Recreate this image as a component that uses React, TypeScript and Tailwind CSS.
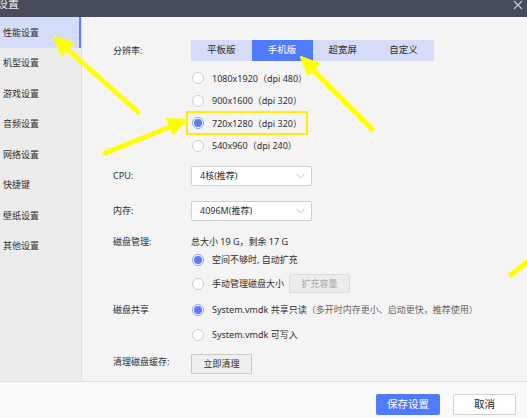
import React from "react";

const font = "font-['Noto_Sans','Noto_Sans_CJK_SC',sans-serif]";

function Radio({ checked }: { checked?: boolean }) {
  return checked ? (
    <span className="w-[12px] h-[12px] rounded-full border border-[#8aa2f5] bg-white flex items-center justify-center shrink-0">
      <span className="w-[8px] h-[8px] rounded-full bg-[#5a7cf6]" />
    </span>
  ) : (
    <span className="w-[12px] h-[12px] rounded-full border border-[#cfcfcf] bg-white shrink-0" />
  );
}

function RadioRow({ checked, children, h }: { checked?: boolean; children: React.ReactNode; h: string }) {
  return (
    <div className={`flex items-center gap-[8px] pl-[1px] ${h}`}>
      <Radio checked={checked} />
      <span>{children}</span>
    </div>
  );
}

function Select({ value }: { value: string }) {
  return (
    <div className="w-[121px] h-[20px] border border-[#d0d0d0] rounded-[2px] bg-white flex items-center justify-between pl-[8px] pr-[6px]">
      <span>{value}</span>
      <svg width="9" height="6" viewBox="0 0 9 6">
        <path d="M0.5 0.8 L4.5 4.8 L8.5 0.8" fill="none" stroke="#b8b8b8" strokeWidth="0.9" />
      </svg>
    </div>
  );
}

export default function App() {
  const side = ["性能设置", "机型设置", "游戏设置", "音频设置", "网络设置", "快捷键", "壁纸设置", "其他设置"];
  const tabs = ["平板版", "手机版", "超宽屏", "自定义"];
  return (
    <div className={`relative w-[527px] h-[418px] overflow-hidden bg-[#f4f4f4] text-[#2e2e2e] text-[9px] ${font}`}>
      {/* title bar */}
      <div className="h-[17px] bg-[#474c5c] flex justify-between">
        <span className="-ml-[3px] -mt-[4px] text-[11px] leading-[16px] text-[#eeeeee]">设置</span>
        <svg width="10" height="10" viewBox="0 0 10 10" className="mr-[4px] mt-[0px]">
          <path d="M1 1 L9 9 M9 1 L1 9" stroke="#c9cbd0" strokeWidth="1.1" />
        </svg>
      </div>
      <div className="flex h-[364px]">
        {/* sidebar */}
        <div className="w-[82px] bg-[#ececec] border-r border-[#dedede] flex flex-col">
          {side.map((s, i) => (
            <div
              key={s}
              className={`h-[30.5px] flex items-center pl-[3px] ${i === 0 ? "bg-[#d4dcf9] border-r-[2px] border-[#5f7ff2]" : ""}`}
            >
              {s}
            </div>
          ))}
        </div>
        {/* content */}
        <div className="flex-1 pl-[31px] pt-[23px] flex flex-col">
          <div className="flex">
            <div className="w-[78px] h-[21px] flex items-center">分辨率:</div>
            <div className="flex flex-col">
              <div className="flex h-[21px] bg-[#d4dcf8] text-[9.5px]">
                {tabs.map((t, i) => (
                  <div
                    key={t}
                    className={`w-[60.75px] flex items-center justify-center ${i === 1 ? "bg-[#4f7bfc] text-white" : ""}`}
                  >
                    {t}
                  </div>
                ))}
              </div>
              <div className="h-[6px]" />
              <RadioRow h="h-[22.5px]">1080x1920（dpi 480）</RadioRow>
              <RadioRow h="h-[22.5px]">900x1600（dpi 320）</RadioRow>
              <RadioRow h="h-[22.5px]" checked>720x1280（dpi 320）</RadioRow>
              <RadioRow h="h-[22.5px]">540x960（dpi 240）</RadioRow>
            </div>
          </div>
          <div className="flex mt-[9px] items-center">
            <div className="w-[78px]">CPU:</div>
            <Select value="4核(推荐)" />
          </div>
          <div className="flex mt-[15px] items-center">
            <div className="w-[78px]">内存:</div>
            <Select value="4096M(推荐)" />
          </div>
          <div className="flex mt-[13px]">
            <div className="w-[78px] h-[15px] flex items-center">磁盘管理:</div>
            <div className="flex flex-col">
              <div className="h-[15px] flex items-center">总大小 19 G，剩余 17 G</div>
              <RadioRow h="h-[21px]" checked>空间不够时, 自动扩充</RadioRow>
              <div className="flex items-center h-[23px] mt-[2px]">
                <RadioRow h="h-[23px]">手动管理磁盘大小</RadioRow>
                <div className="ml-[5px] w-[61px] h-[19px] bg-[#ececec] border border-[#dcdcdc] rounded-[2px] flex items-center justify-center text-[#a8a8a8]">
                  扩充容量
                </div>
              </div>
            </div>
          </div>
          <div className="flex mt-[3px]">
            <div className="w-[78px] h-[24px] flex items-center">磁盘共享</div>
            <div className="flex flex-col">
              <RadioRow h="h-[24px]" checked>
                System.vmdk 共享只读<span className="text-[#666]">（多开时内存更小、启动更快，推荐使用）</span>
              </RadioRow>
              <RadioRow h="h-[26px]">System.vmdk 可写入</RadioRow>
            </div>
          </div>
          <div className="flex mt-[6px] items-center">
            <div className="w-[78px] -mt-[4px]">清理磁盘缓存:</div>
            <div className="w-[61px] h-[20px] bg-[#efefef] border border-[#c9c9c9] rounded-[1px] flex items-center justify-center">
              立即清理
            </div>
          </div>
        </div>
      </div>
      {/* footer */}
      <div className="h-[37px] bg-[#fafafa] border-t border-[#e2e2e2] flex justify-end items-start pt-[12px] pr-[11px] gap-[13px] text-[10.5px]">
        <div className="w-[64px] h-[21px] rounded-[2px] bg-[#4f7bfc] text-white flex items-center justify-center">保存设置</div>
        <div className="w-[63px] h-[21px] rounded-[2px] bg-white border border-[#d0d0d0] flex items-center justify-center text-[#222]">取消</div>
      </div>
      {/* yellow annotations */}
      <div className="absolute left-[186px] top-[111px] w-[122px] h-[24px] border-[2px] border-[#ffee00]" />
      <svg className="absolute inset-0 pointer-events-none" width="527" height="418" viewBox="0 0 527 418">
        <g stroke="#ffff00" strokeWidth="5" strokeLinecap="round" fill="none">
          <line x1="138" y1="112" x2="67" y2="49" />
          <line x1="105" y1="153" x2="170" y2="127" />
          <line x1="372" y1="129" x2="313" y2="70" />
          <line x1="511" y1="275" x2="532" y2="258" />
        </g>
        <g fill="#ffff00" stroke="#ffff00" strokeWidth="2" strokeLinejoin="round">
          <polygon points="54,37 73,43 62,55" />
          <polygon points="187,120 173,134 167,119" />
          <polygon points="301,57 319,64 308,75" />
        </g>
      </svg>
    </div>
  );
}
